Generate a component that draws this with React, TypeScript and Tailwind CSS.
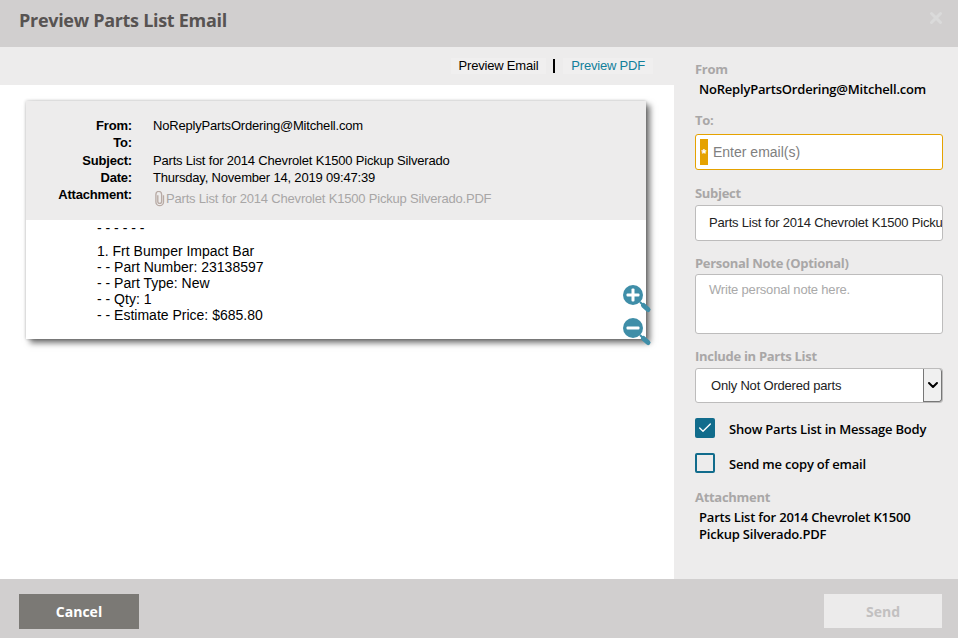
import React from "react";
import { Check, ChevronDown, X } from "lucide-react";

const headerRows = [
  { label: "From:", value: "NoReplyPartsOrdering@Mitchell.com" },
  { label: "To:", value: "" },
  { label: "Subject:", value: "Parts List for 2014 Chevrolet K1500 Pickup Silverado" },
  { label: "Date:", value: "Thursday, November 14, 2019 09:47:39" },
];

const bodyLines = [
  "1. Frt Bumper Impact Bar",
  "- - Part Number: 23138597",
  "- - Part Type: New",
  "- - Qty: 1",
  "- - Estimate Price: $685.80",
];

const sans = "font-['Liberation_Sans',Arial,sans-serif]";
const open = "font-['Open_Sans',sans-serif]";

const FieldLabel = ({ children, className = "" }: { children: React.ReactNode; className?: string }) => (
  <div className={`${open} text-[13px] leading-[18px] font-bold tracking-[-0.3px] text-[#a9a7a7] ${className}`}>{children}</div>
);

const ZoomIcon = ({ minus = false }: { minus?: boolean }) => (
  <svg width="30" height="30" viewBox="0 0 30 30">
    <line x1="18" y1="17" x2="21" y2="20" stroke="#3f8ea8" strokeWidth="2" />
    <line x1="21.5" y1="20.5" x2="26" y2="24.5" stroke="#3f8ea8" strokeWidth="5" strokeLinecap="round" />
    <circle cx="11" cy="10" r="10" fill="#3f8ea8" />
    <rect x="4.5" y="8.5" width="13" height="3" rx="1" fill="#fff" />
    {!minus && <rect x="9.5" y="3.5" width="3" height="13" rx="1" fill="#fff" />}
  </svg>
);

const Clip = () => (
  <svg width="12" height="16" viewBox="0 0 12 16" className="shrink-0" fill="none" stroke="#b8aaa4" strokeWidth="1.4">
    <path d="M4 5v6.5a2 2 0 0 0 4 0V4a3 3 0 0 0-6 0v8a4 4 0 0 0 8 0V5" transform="translate(0 -0.5) scale(0.95)" />
  </svg>
);

export default function App() {
  return (
    <div className={`${sans} flex h-[638px] w-[958px] flex-col overflow-hidden bg-white`}>
      <header className="flex h-[47px] shrink-0 items-start justify-between bg-[#d1cfcf] pl-[19px] pr-[13px]">
        <h1 className={`${open} pt-[8px] text-[18px] leading-[24px] font-bold tracking-[-0.3px] text-[#575352]`}>Preview Parts List Email</h1>
        <X className="mt-[9px] h-[18px] w-[18px] text-[#dadada]" strokeWidth={4} />
      </header>

      <div className="flex min-h-0 flex-1">
        <main className="flex w-[674px] shrink-0 flex-col">
          <div className="flex h-[38px] shrink-0 items-center justify-end gap-[7px] bg-[#edecec] pr-[21px] text-[13px] tracking-[-0.2px]">
            <span className="bg-[#f0efef] px-[8px] leading-[16px] text-black">Preview Email</span>
            <span className="h-[14px] w-[2px] bg-black" />
            <span className="ml-[1px] bg-[#f0efef] px-[8px] leading-[16px] text-[#12809b]">Preview PDF</span>
          </div>

          <div className="flex-1 bg-white pl-[26px] pr-[28px] pt-[16px]">
            <div className="relative h-[238px] bg-white shadow-[4px_4px_6px_rgba(0,0,0,0.55),0_0_3px_rgba(0,0,0,0.25)]">
              <div className="h-[119px] bg-[#edecec] pt-[16px] text-[13px] leading-[17.3px] tracking-[-0.19px] text-black">
                {headerRows.map((row) => (
                  <div key={row.label} className="flex h-[17.3px]">
                    <div className="w-[106px] text-right font-bold">{row.label}</div>
                    <div className="ml-[21px]">{row.value}</div>
                  </div>
                ))}
                <div className="flex">
                  <div className="w-[106px] text-right font-bold">Attachment:</div>
                  <div className="ml-[22px] mt-[4px] flex items-center text-[#a8a6a6]">
                    <Clip />
                    <span>Parts List for 2014 Chevrolet K1500 Pickup Silverado.PDF</span>
                  </div>
                </div>
              </div>
              <div className="pl-[71px] text-[14px] leading-[16px] text-black">
                <div className="h-[23px]">- - - - - -</div>
                {bodyLines.map((line) => (
                  <div key={line}>{line}</div>
                ))}
              </div>
              <div className="absolute left-[596px] top-[184px]">
                <ZoomIcon />
              </div>
              <div className="absolute left-[596px] top-[217px]">
                <ZoomIcon minus />
              </div>
            </div>
          </div>
        </main>

        <aside className="flex w-[284px] min-w-0 flex-col bg-[#edecec] pl-[21px] pr-[15px] pt-[13px]">
          <FieldLabel>From</FieldLabel>
          <div className={`${open} pl-[4px] pt-[2px] text-[13px] leading-[18px] font-semibold tracking-[-0.2px] text-black`}>
            NoReplyPartsOrdering@Mitchell.com
          </div>

          <FieldLabel className="mt-[13px]">To:</FieldLabel>
          <div className="mt-[5px] flex h-[36px] items-center rounded-[3px] border border-[#e5a200] bg-white pl-[4px]">
            <span className="flex h-[26px] w-[8px] items-center justify-center bg-[#e5a200] pt-[3px] text-[13px] font-bold leading-none text-white">*</span>
            <span className="ml-[5px] text-[14px] text-[#808080]">Enter email(s)</span>
          </div>

          <FieldLabel className="mt-[14px]">Subject</FieldLabel>
          <div className="mt-[3px] flex h-[36px] items-center overflow-hidden whitespace-nowrap rounded-[3px] border border-[#bdbcbc] bg-white pb-[1px] pl-[13px] text-[13px] tracking-[-0.19px] text-[#222]">
            Parts List for 2014 Chevrolet K1500 Pickup Silverado
          </div>

          <FieldLabel className="mt-[13px]">Personal Note (Optional)</FieldLabel>
          <div className="mt-[2px] h-[60px] rounded-[3px] border border-[#bdbcbc] bg-white pl-[13px] pt-[5px] text-[13px] tracking-[-0.19px] text-[#a9a9a9]">
            Write personal note here.
          </div>

          <FieldLabel className="mt-[13px]">Include in Parts List</FieldLabel>
          <div className="mt-[3px] flex h-[35px] items-stretch rounded-[3px] border border-[#bdbcbc] bg-white text-[13px] tracking-[-0.19px] text-[#222]">
            <div className="flex flex-1 items-center pl-[15px]">Only Not Ordered parts</div>
            <div className="flex w-[19px] items-center justify-center rounded-r-[3px] border-x border-b border-[#777] bg-[#f0f0f0]">
              <ChevronDown className="h-[16px] w-[16px] text-black" strokeWidth={3} />
            </div>
          </div>

          <div className="mt-[15px] flex items-center">
            <span className="flex h-[20px] w-[20px] items-center justify-center rounded-[2px] bg-[#116c8c]">
              <Check className="h-[16px] w-[16px] text-white" strokeWidth={2} />
            </span>
            <span className={`${open} ml-[14px] pt-[1px] text-[13px] leading-[18px] font-semibold tracking-[-0.2px] text-black`}>Show Parts List in Message Body</span>
          </div>
          <div className="mt-[15px] flex items-center">
            <span className="h-[20px] w-[20px] rounded-[2px] border-2 border-[#116c8c] bg-transparent" />
            <span className={`${open} ml-[14px] pt-[1px] text-[13px] leading-[18px] font-semibold tracking-[-0.2px] text-black`}>Send me copy of email</span>
          </div>

          <FieldLabel className="mt-[15px]">Attachment</FieldLabel>
          <div className={`${open} pl-[4px] pt-[3px] text-[13px] leading-[17px] font-semibold tracking-[-0.2px] text-black`}>
            Parts List for 2014 Chevrolet K1500 Pickup Silverado.PDF
          </div>
        </aside>
      </div>

      <footer className="flex h-[59px] shrink-0 items-center justify-between bg-[#d1cfcf] pl-[19px] pr-[16px] pt-[5px]">
        <button type="button" className={`${open} h-[35px] w-[120px] bg-[#7b7975] text-[14px] font-bold text-white`}>
          Cancel
        </button>
        <button type="button" className={`${open} h-[34px] w-[118px] bg-[#ecebeb] text-[14px] font-bold text-[#c2c0c0]`}>
          Send
        </button>
      </footer>
    </div>
  );
}
